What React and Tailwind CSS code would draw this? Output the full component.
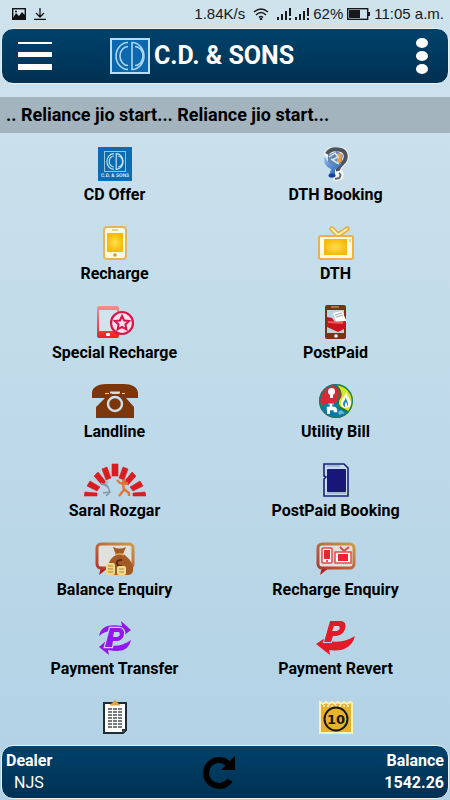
import React from 'react';

const LogoMark = () => (
  <>
    <path d="M17 5.5A11.5 13 0 0 0 17 32.5M17 9.5A8 9.5 0 0 0 17 28.5" />
    <path d="M21 5.5A11.5 13 0 0 1 21 32.5ZM24 9.5A8 9.5 0 0 1 24 28.5" />
  </>
);

const HeaderLogo = () => (
  <svg className="h-9 w-10" viewBox="0 0 40 36">
    <rect x="1" y="1" width="38" height="34" fill="#0c69ae" stroke="#b9dcf2" strokeWidth="2" />
    <g fill="none" stroke="#a9d6f5" strokeWidth="1.6" transform="translate(1 -1)">
      <LogoMark />
    </g>
  </svg>
);

const OfferIcon = () => (
  <svg className="h-[34px] w-[34px]" viewBox="0 0 34 34">
    <rect width="34" height="34" fill="#0d6cb0" />
    <rect x="6.5" y="4.500" width="21" height="20" fill="none" stroke="#8fc4e6" />
    <g fill="none" stroke="#c3e4f7" strokeWidth="2" transform="translate(6 3.5) scale(.58)">
      <LogoMark />
    </g>
    <text x="17" y="30" textAnchor="middle" fontSize="5" fontWeight="700" textRendering="geometricPrecision" fill="#cfe9f8">C.D. &amp; SONS</text>
  </svg>
);

const DthBookingIcon = () => (
  <svg className="h-[34px] w-[34px]" viewBox="0 0 34 34">
    <defs>
      <linearGradient id="dish" x1="0" y1="0" x2="1" y2="1">
        <stop offset="0" stopColor="#8bb9ed" />
        <stop offset="1" stopColor="#1556ae" />
      </linearGradient>
    </defs>
    <path d="M8 7C11 1 17 2 20 2.500C26 3 28 8 26 13C24 18 18 19 19 25Q23 26 21 30L17 31" fill="none" stroke="#f3f7f9" strokeWidth="6" strokeLinecap="round" />
    <path d="M8 7C11 1 17 2 20 2.500C26 3 28 8 26 13C24 18 18 19 19 24" fill="none" stroke="#4d535a" strokeWidth="4" />
    <path d="M20 26q3 2 0 5l-4 1" fill="none" stroke="#63686d" strokeWidth="2" />
    <path d="M9 8l9-4 6 4-2 9-8 3-5-5z" fill="#6187ab" />
    <path d="M18 6l5 1-1 8-4 2z" fill="#e9a24a" />
    <path d="M10 10l6-4 3 4-6 3M12 12l8 5" fill="none" stroke="#d5e7f5" strokeWidth="1.5" />
    <path d="M6 9C7 16 14 19 23 17C20 21 16 21 16 24V29Q13 32 10 29L12 22C6 20 4 14 6 9Z" fill="url(#dish)" />
    <ellipse cx="13" cy="28.5" rx="3.5" ry="2" fill="#17449a" />
  </svg>
);

const RechargeIcon = () => (
  <svg className="h-[34px] w-[24px]" viewBox="0 0 24 34">
    <defs>
      <radialGradient id="gold">
        <stop offset="0" stopColor="#ffe04a" />
        <stop offset="1" stopColor="#f7b90c" />
      </radialGradient>
    </defs>
    <rect x="1" y="1" width="22" height="32" rx="3" fill="#fff9df" stroke="#e5b55b" strokeWidth="2" />
    <rect x="4" y="7" width="16" height="19" fill="url(#gold)" />
    <path d="M9 4h6" stroke="#d6a13c" />
    <circle cx="12" cy="29" r="1.8" fill="#d49b2d" />
  </svg>
);

const DthIcon = () => (
  <svg className="h-[34px] w-9" viewBox="0 0 36 34">
    <path d="M14 3L20 9L29 3" fill="none" stroke="#e7ad30" strokeWidth="5" strokeLinecap="round" />
    <path d="M14 3L20 9L29 3" fill="none" stroke="#fff3c4" strokeWidth="2" strokeLinecap="round" />
    <rect x="1" y="10" width="34" height="23" rx="2" fill="#fffbe4" stroke="#e9b241" strokeWidth="2" />
    <rect x="6" y="13" width="23" height="16" fill="url(#gold)" />
    <path d="M32 13v3" stroke="#e5ad39" />
  </svg>
);

const SpecialRechargeIcon = () => (
  <svg className="h-[34px] w-[38px]" viewBox="0 0 38 34">
    <defs>
      <linearGradient id="redPhone" x1="0" y1="0" x2="0" y2="1">
        <stop offset="0" stopColor="#f49090" />
        <stop offset="1" stopColor="#ee2020" />
      </linearGradient>
    </defs>
    <rect x="1" y="1" width="22" height="32" rx="2" fill="url(#redPhone)" />
    <rect x="3" y="5" width="18" height="21" fill="#d3e3ed" />
    <rect x="10" y="28" width="4" height="3" rx="1" fill="#fff" />
    <circle cx="26" cy="18" r="11" fill="#f7dfe9" stroke="#d9134d" strokeWidth="2.2" />
    <path d="M26 11l2.100 4.500 5 .6-3.700 3.300 1 4.900-4.400-2.500-4.400 2.500 1-4.900-3.700-3.300 5-.6z" fill="none" stroke="#d9134d" strokeWidth="2" />
  </svg>
);

const PostPaidIcon = () => (
  <svg className="h-[34px] w-6" viewBox="0 0 24 34">
    <rect x="1" width="21" height="34" rx="2" fill="#7b3210" />
    <rect x="3" y="5" width="17" height="23" fill="#b9d3e0" />
    <path d="M7 2h8" stroke="#dba88b" />
    <path d="M9 8l9-2 5 11-9 4z" fill="#fff" />
    <path d="M11 10l7-2M12 12l7-2" stroke="#98a2aa" />
    <path d="M3 12l5 1 3 4 11-1v7l-8 4-11-5z" fill="#c9141d" />
    <path d="M4 17l15 1" stroke="#ee5961" strokeWidth="2" />
    <circle cx="12" cy="31" r="1.8" fill="#fff" />
  </svg>
);

const LandlineIcon = () => (
  <svg className="h-[34px] w-12" viewBox="0 0 48 34">
    <path d="M1 14V9C1 3 8 0 15 0h18c7 0 14 3 14 9v5H34V9H14v5zM14 10h4v-3h3v3h7v-3h3v3h4v4l8 9v11H5V23l9-9z" fill="#7b360c" />
    <circle cx="24" cy="20" r="7" fill="#7b360c" stroke="#d1dfe8" strokeWidth="2.4" />
    <path d="M19 8.5h10" stroke="#d1dfe8" strokeWidth="2" />
  </svg>
);

const UtilityIcon = () => (
  <svg className="h-[34px] w-[34px]" viewBox="0 0 34 34">
    <circle cx="17" cy="17" r="17" fill="#d92836" />
    <path d="M17 0A17 17 0 0 1 27 31C25 24 17 27 18 18C27 12 22 3 13 1Z" fill="#d8e52b" />
    <path d="M2 24C8 15 14 23 18 17C17 27 25 23 29 29A17 17 0 0 1 2 24Z" fill="#087ba5" />
    <path d="M15 1C26 6 18 14 19 20C20 26 27 24 29 29" fill="none" stroke="#197947" strokeWidth="2" />
    <circle cx="17" cy="17" r="16.3" fill="none" stroke="#187a74" strokeWidth="1.4" />
    <circle cx="12.5" cy="7.5" r="3.5" fill="#fff" />
    <path d="M11 10h3v4h-3z" fill="#fff" />
    <path d="M27 8c-1 5-5 7-5 11 0 7 10 6 10 0 0-3-4-6-5-11z" fill="#fff" />
    <path d="M27 13c-1 4-3 5-3 7 0 4 5 4 5 0 0-2-2-4-2-7z" fill="#1783b5" />
    <path d="M27 18c-2 3-1 5 0 5s2-2 0-5z" fill="#fff" />
    <path d="M8 23h7q3 0 3 5h-3v-2H8zM11 20h2v3h-2zM9 20h6" fill="#fff" stroke="#fff" strokeWidth=".6" />
    <path d="M8 26h3v4H8z" fill="#fff" />
    <path d="M19 28l3-2 4 3-6 2z" fill="#62b8d2" />
  </svg>
);

const SaralIcon = () => (
  <svg className="h-[34px] w-[62px]" viewBox="0 0 62 34">
    <path
      d="M0 33l1-4 12 1v3zM3 23l3-5 10 6-3 4zM10 13l4-4 8 10-4 3zM18 6l5-2 4 11-5 2zM28 1h6v12h-6zM39 4l5 2-4 11-5-2zM48 9l4 4-8 9-4-3zM56 18l3 5-10 5-3-4zM61 29l1 4H49v-3z"
      fill="#d91d20"
      stroke="#d91d20"
      strokeWidth=".6"
    />
    <path d="M17 20l7 4 2 5-7 1M24 24l-3-4M26 29l-4 4" fill="none" stroke="#8799a5" strokeWidth="1.6" />
    <path d="M33 17l3 3 5 1 3-1M39 21l1 6-5 6M40 26l5 4v3" fill="none" stroke="#e27534" strokeWidth="2.4" />
    <circle cx="23" cy="19" r="1.8" fill="#acbec8" />
    <circle cx="40" cy="18" r="2" fill="#dc7137" />
  </svg>
);

const PostPaidBookingIcon = () => (
  <svg className="h-[34px] w-[26px]" viewBox="0 0 26 34">
    <path d="M1 1h20l4 4v28H1V16l2-2-2-1z" fill="#c5dcea" stroke="#182179" strokeWidth="1.6" />
    <rect x="4" y="6" width="19" height="23" rx="1" fill="#171779" />
    <path d="M4 3h13M4 30h19" stroke="#8499c3" />
  </svg>
);

const Bubble = () => (
  <>
    <defs>
      <linearGradient id="bubble" x1="0" y1="1" x2="1" y2="0">
        <stop offset="0" stopColor="#b1372e" />
        <stop offset="1" stopColor="#ce9b45" />
      </linearGradient>
    </defs>
    <path d="M6 25L4 33L13 26Z" fill="#b51f22" />
    <rect x="2" y="2" width="36" height="24" rx="4" fill="#dfe1df" stroke="url(#bubble)" strokeWidth="3" />
  </>
);

const BalanceIcon = () => (
  <svg className="h-[34px] w-10" viewBox="0 0 40 34">
    <Bubble />
    <path d="M18 5q7 3 13 0l-3 7c12 7 13 21 5 21H17c-7-5-4-16 4-20z" fill="#a35a24" />
    <path d="M20 13q5-2 9 0" stroke="#e1a75c" strokeWidth="1.5" fill="none" />
    <path d="M27 18c-7-1-7 7 0 6" fill="none" stroke="#5c2a11" strokeWidth="2" />
    <rect x="11" y="21" width="9" height="12" rx="2" fill="#eed682" />
    <rect x="22" y="24" width="9" height="9" rx="2" fill="#f4dc91" />
    <path d="M13 24h5M13 27h5M13 30h5M24 27h5M24 30h5" stroke="#b28637" />
  </svg>
);

const EnquiryIcon = () => (
  <svg className="h-[34px] w-10" viewBox="0 0 40 34">
    <Bubble />
    <rect x="6" y="6" width="10" height="15" rx="1" fill="#fff" stroke="#e8444a" strokeWidth="1.5" />
    <rect x="8" y="8" width="6" height="9" fill="#e7262e" />
    <circle cx="11" cy="19" r="1" fill="#e7262e" />
    <path d="M24 5l4 4 5-4" fill="none" stroke="#d7474b" strokeWidth="2" />
    <rect x="19" y="10" width="16" height="11" fill="#fff" stroke="#e8444a" strokeWidth="1.5" />
    <rect x="22" y="12" width="10" height="7" fill="#e7262e" />
  </svg>
);

const TransferIcon = () => (
  <svg className="h-[34px] w-8" viewBox="0 0 32 34">
    <g fill="#9317ed">
      <path d="M0 15C2 4 12 3 23 5L22 0L32 9L24 15L24 11C14 9 7 9 0 15Z" />
      <path d="M32 19C29 31 20 31 9 29L10 34L0 26L8 19V24C18 26 25 24 32 19Z" />
      <path d="M11 7h9c8 0 6 13-2 13h-4l-1 6H6z" stroke="#bed8e9" strokeWidth="2.5" paintOrder="stroke" />
    </g>
    <path d="M15 11h4c3 0 2 5-1 5h-4z" fill="#bed8e9" />
  </svg>
);

const RevertIcon = () => (
  <svg className="h-[34px] w-10" viewBox="0 0 40 34">
    <path d="M0 23L12 15V20C25 22 32 19 39 15C36 27 26 31 13 29L14 34Z" fill="#df1c28" />
    <path d="M14 0h11c8 0 5 15-5 15h-3l-2 6H8z" fill="#df1c28" stroke="#c5dbe8" strokeWidth="2" paintOrder="stroke" />
    <path d="M18 5h4c3 0 2 5-2 5h-4z" fill="#c5dbe8" />
  </svg>
);

const ReportIcon = () => (
  <svg className="h-[34px] w-6" viewBox="0 0 24 34">
    <path d="M1 3h22v27l-3 3H1z" fill="#fff" stroke="#202b36" strokeWidth="2" />
    <path d="M5 9h4M10 9h4M15 9h4M5 12h4M10 12h4M15 12h4M5 15h4M10 15h4M15 15h4M5 18h4M10 18h4M15 18h4M5 21h4M10 21h4M15 21h4M5 24h4M10 24h4M15 24h4M5 27h4M10 27h4M15 27h4" stroke="#4b5055" strokeWidth="1.5" />
    <path d="M7 5l3-2q2-5 4 0l3 2z" fill="#dfa447" stroke="#dfa447" />
    <path d="M19 32v-3h4z" fill="#202b36" />
  </svg>
);

const CalendarIcon = () => (
  <svg className="h-[34px] w-[34px]" viewBox="0 0 34 34">
    <path d="M1 2l3 2 3-2 3 2 3-2 3 2 3-2 3 2 3-2 3 2 3-2 2 1v30H1z" fill="#e7b02c" stroke="#fff2b4" strokeWidth="2" />
    <path d="M4 6h26" stroke="#fff4c8" strokeWidth="1.5" strokeDasharray="2 2" />
    <circle cx="17" cy="19" r="11.5" fill="#e9b22c" stroke="#171713" strokeWidth="2" />
    <text x="17" y="24" textAnchor="middle" fontSize="13" fontWeight="700" fill="#171713" className="font-['DejaVu_Sans']">10</text>
  </svg>
);

const menuItems = [
  { name: 'CD Offer', Icon: OfferIcon },
  { name: 'DTH Booking', Icon: DthBookingIcon },
  { name: 'Recharge', Icon: RechargeIcon },
  { name: 'DTH', Icon: DthIcon },
  { name: 'Special Recharge', Icon: SpecialRechargeIcon },
  { name: 'PostPaid', Icon: PostPaidIcon },
  { name: 'Landline', Icon: LandlineIcon },
  { name: 'Utility Bill', Icon: UtilityIcon },
  { name: 'Saral Rozgar', Icon: SaralIcon },
  { name: 'PostPaid Booking', Icon: PostPaidBookingIcon },
  { name: 'Balance Enquiry', Icon: BalanceIcon },
  { name: 'Recharge Enquiry', Icon: EnquiryIcon },
  { name: 'Payment Transfer', Icon: TransferIcon },
  { name: 'Payment Revert', Icon: RevertIcon },
  { label: 'Reports', Icon: ReportIcon },
  { label: 'Day Book', Icon: CalendarIcon },
];

const Signal = () => (
  <svg className="h-3 w-[14px]" viewBox="0 0 14 12" fill="#17191b">
    <path d="M0 9h2v3H0zM4 6h2v6H4zM8 3h2v9H8zM12 0h2v8h-2zM12 10h2v2h-2z" />
  </svg>
);

const StatusBar = () => (
  <div className="flex h-7 items-center justify-between pl-3 pr-1.5 font-['Liberation_Sans',sans-serif] text-[15px] text-[#17191b]">
    <div className="flex items-center gap-2">
      <svg className="h-3 w-[14px]" viewBox="0 0 14 12">
        <rect x=".7" y=".7" width="12.6" height="10.6" fill="none" stroke="#111" strokeWidth="1.4" />
        <path d="M1 10l3-5 3 3 3-4 3 3v4H1z" fill="#111" />
        <circle cx="4" cy="3.5" r="1" fill="#111" />
      </svg>
      <svg className="h-3 w-3" viewBox="0 0 12 12" fill="none" stroke="#111" strokeWidth="1.3">
        <path d="M6 0v8M2 5l4 4 4-4M0 11.3h12" />
      </svg>
    </div>
    <div className="flex items-center gap-1">
      <span className="mr-1">1.84K/s</span>
      <svg className="mr-1 h-3 w-4" viewBox="0 0 16 12" fill="none" stroke="#17191b" strokeWidth="1.5">
        <path d="M1 4Q8-2 15 4M3 7Q8 2 13 7M6 9.500Q8 7.500 10 9.500" />
        <circle cx="8" cy="11" r=".6" />
      </svg>
      <Signal />
      <Signal />
      <span>62%</span>
      <svg className="h-3 w-[23px]" viewBox="0 0 23 12">
        <rect x=".7" y=".7" width="20" height="10.6" fill="none" stroke="#17191b" strokeWidth="1.4" />
        <path d="M2 2h11v8H2zM21 4h2v4h-2z" fill="#17191b" />
      </svg>
      <span>11:05 a.m.</span>
    </div>
  </div>
);

const Header = () => (
  <header className="flex h-14 items-center justify-between rounded-xl border border-[#e8f3f8] bg-linear-to-b from-[#00426b] to-[#003153] pl-4 pr-5">
    <button type="button" aria-label="Menu">
      <svg className="h-7 w-[34px]" viewBox="0 0 34 28" fill="#fff">
        <path d="M0 0h34v2H0zM0 10h34v5H0zM0 22h34v6H0z" />
      </svg>
    </button>
    <div className="flex items-center gap-1">
      <HeaderLogo />
      <h1 className="text-[25px] font-bold text-white">C.D. &amp; SONS</h1>
    </div>
    <button type="button" aria-label="More options" className="ml-16">
      <svg className="h-9 w-3" viewBox="0 0 12 36" fill="#fff">
        <ellipse cx="6" cy="5" rx="6" ry="5" />
        <ellipse cx="6" cy="18" rx="6" ry="5" />
        <ellipse cx="6" cy="31" rx="6" ry="5" />
      </svg>
    </button>
  </header>
);

const App = () => {
  return (
    <div className="flex h-screen flex-col overflow-hidden bg-linear-to-b from-[#cfe3ed] to-[#b0d1e5] font-[Roboto,sans-serif] text-black">
      <StatusBar />
      <div className="px-px">
        <Header />
      </div>

      {/* Scrolling news line */}
      <div className="mt-[13px] h-9 shrink-0 overflow-hidden whitespace-nowrap bg-[#a3b4be] pl-1.5 text-[18px] font-bold leading-9">
        .. Reliance jio start... Reliance jio start...
      </div>

      {/* Menu */}
      <main className="min-h-0 flex-1 overflow-hidden px-1 pt-2.5">
        <div className="grid grid-cols-2">
          {menuItems.map(({ name, label, Icon }) => (
            <button
              key={name || label}
              type="button"
              aria-label={label}
              className="flex h-[79px] flex-col items-center gap-0.5 pt-1"
            >
              <Icon />
              {name && <span className="text-[16px] font-bold leading-6">{name}</span>}
            </button>
          ))}
        </div>
      </main>

      <div className="px-px pb-px">
        <footer className="grid grid-cols-3 items-center rounded-xl border border-[#e8f3f8] bg-linear-to-b from-[#00426b] to-[#003153] px-1 py-1 text-[16px] leading-[22px] text-white">
          <div>
            <p className="font-bold">Dealer</p>
            <p className="pl-2">NJS</p>
          </div>
          <button type="button" aria-label="Refresh" className="justify-self-center pr-3">
            <svg className="h-9 w-9" viewBox="0 0 36 36">
              <path d="M27 9.5A13 13 0 1 0 29 26" fill="none" stroke="#000" strokeWidth="6" />
              <path d="M34 2v14H20z" fill="#000" />
            </svg>
          </button>
          <div className="text-right font-bold">
            <p>Balance</p>
            <p>1542.26</p>
          </div>
        </footer>
      </div>
    </div>
  );
};

export default App;
